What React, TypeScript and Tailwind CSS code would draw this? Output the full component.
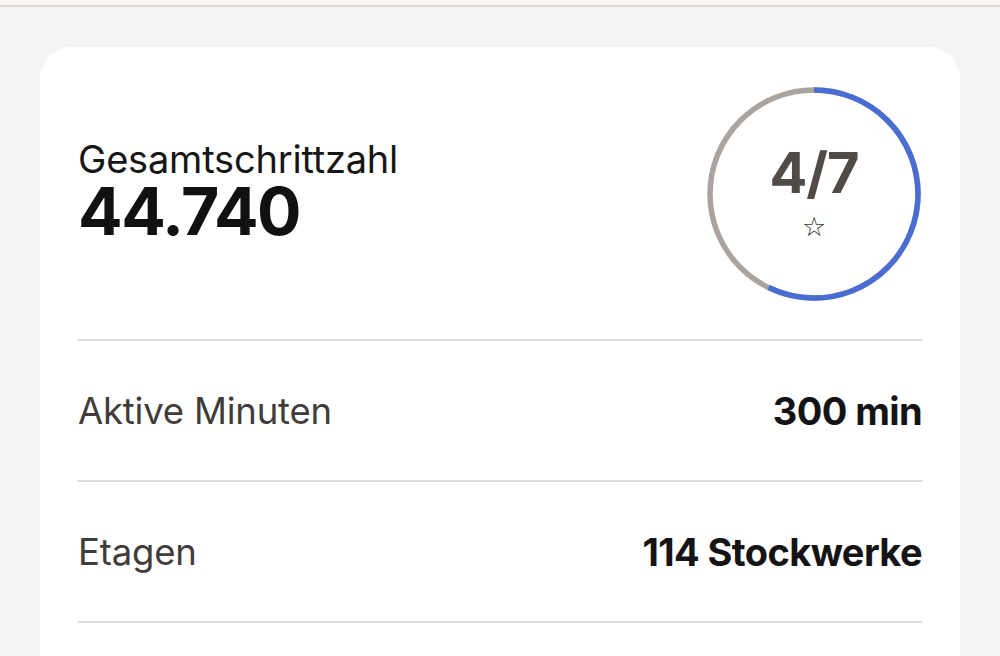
import React from 'react';

const font = { fontFamily: 'Inter, "Noto Sans", sans-serif' };

function Ring({ done, total }: { done: number; total: number }) {
  const r = 104;
  const c = 2 * Math.PI * r;
  const frac = done / total;
  return (
    <div className="relative w-[216px] h-[216px] shrink-0">
      <svg width="216" height="216" viewBox="0 0 216 216" className="absolute inset-0">
        <circle cx="108" cy="108" r={r} fill="none" stroke="#a9a49f" strokeWidth="5.5" />
        <circle
          cx="108"
          cy="108"
          r={r}
          fill="none"
          stroke="#4a6dd4"
          strokeWidth="5.5"
          strokeDasharray={`${c * frac} ${c}`}
          transform="rotate(-90 108 108)"
        />
      </svg>
      <div className="absolute inset-0 flex flex-col items-center justify-center">
        <div className="text-[56px] font-bold leading-none text-[#504b48] tracking-[-1px] mt-[-4px]">
          {done}/{total}
        </div>
        <div className="text-[27px] leading-none text-[#333] mt-[12px]" style={{ fontFamily: '"DejaVu Sans", sans-serif' }}>
          ☆
        </div>
      </div>
    </div>
  );
}

function Row({ label, value }: { label: string; value: string }) {
  return (
    <div className="flex items-center justify-between h-[141px] border-b-2 border-[#dedbd6]">
      <span className="text-[36.5px] text-[#3f3c39] tracking-[-0.2px] pt-[2px]">{label}</span>
      <span className="text-[38px] font-bold text-[#141414] tracking-[-0.6px] pt-[2px]">{value}</span>
    </div>
  );
}

export default function App() {
  return (
    <div className="w-[1000px] h-[656px] overflow-hidden bg-[#f5f4f2]" style={font}>
      <div className="h-[5px] bg-[#f7f6f4]" />
      <div className="h-[2px] bg-[#d9d6d0]" />
      <div className="pt-[40px] px-[40px]">
        <div className="bg-white rounded-[32px] px-[38px] pt-[39px]">
          <div className="flex items-center justify-between pb-[37px] border-b-2 border-[#dedbd6]">
            <div className="flex flex-col">
              <span className="text-[38px] leading-[42px] text-[#161616] tracking-[-0.2px] mt-[-8px]">Gesamtschrittzahl</span>
              <span className="text-[66px] leading-[62px] font-bold text-[#111] tracking-[-1.5px]">44.740</span>
            </div>
            <Ring done={4} total={7} />
          </div>
          <Row label="Aktive Minuten" value="300 min" />
          <Row label="Etagen" value="114 Stockwerke" />
          <div className="h-[60px]" />
        </div>
      </div>
    </div>
  );
}
